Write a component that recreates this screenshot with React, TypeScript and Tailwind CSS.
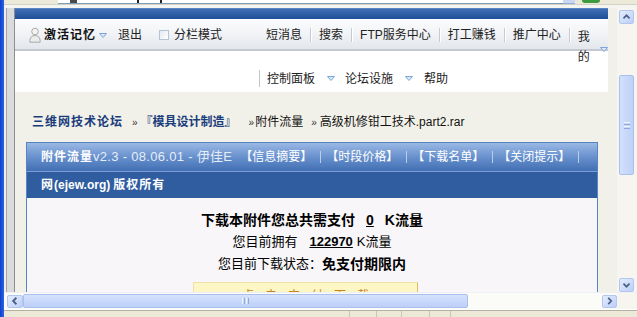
import type { ReactNode } from "react"

function Tri() {
  return (
    <svg width="8" height="5" viewBox="0 0 8 5" className="shrink-0">
      <path d="M0.5 0.5 L7.5 0.5 L4 4.5 Z" fill="#dbe8f8" stroke="#7ba6d9" strokeWidth="1" />
    </svg>
  )
}

function UserIcon() {
  return (
    <svg width="12" height="16" viewBox="0 0 12 16" className="shrink-0">
      <circle cx="6" cy="4.5" r="3.3" fill="#f4f4f4" stroke="#a9a9a9" strokeWidth="1" />
      <path d="M0.8 15.2 C0.8 10 2.8 8.6 6 8.6 C9.2 8.6 11.2 10 11.2 15.2 Z" fill="#ececec" stroke="#a9a9a9" strokeWidth="1" />
    </svg>
  )
}

function Chevron({ dir }: { dir: "up" | "down" | "left" | "right" }) {
  const d = {
    up: "M4 8.5 L7.5 5 L11 8.5",
    down: "M4 5.5 L7.5 9 L11 5.5",
    left: "M9 3.5 L5.5 7 L9 10.5",
    right: "M6 3.5 L9.5 7 L6 10.5",
  }[dir]
  return (
    <svg width="15" height="14" viewBox="0 0 15 14">
      <path d={d} fill="none" stroke="#4d6185" strokeWidth="2" />
    </svg>
  )
}

function ScrollBtn({ dir, w = 15, h = 14 }: { dir: "up" | "down" | "left" | "right"; w?: number; h?: number }) {
  return (
    <div
      className="flex shrink-0 items-center justify-center overflow-hidden rounded-[2px] border border-[#b3c6ef] bg-gradient-to-br from-[#e4edfe] to-[#bccff8]"
      style={{ width: w, height: h }}
    >
      <Chevron dir={dir} />
    </div>
  )
}

function NavSep() {
  return <span className="mx-[8px] h-[14px] w-px shrink-0 bg-[#c6cad2] shadow-[1px_0_0_#ffffff]" />
}

function MenuSep() {
  return <span className="h-[17px] w-px shrink-0 bg-[#c4c4c4]" />
}

function HeadSep() {
  return <span className="ml-[8px] mr-[5px] h-[12px] w-px shrink-0 bg-[#b9cde9]" />
}

function Crumb({ children }: { children: ReactNode }) {
  return <span className="text-[10px] text-[#333]">{children}</span>
}

function TopStrip() {
  return (
    <div className="flex h-[8px] shrink-0 flex-col">
      <div className="flex h-[4px] bg-[#ece9d8]">
        <div className="ml-[54px] flex h-full w-[505px] border-b border-[#7f9db9] bg-white">
          <span className="ml-[12px] h-[3px] w-[7px] bg-[#4a4a4a]" />
          <span className="ml-[60px] h-[3px] w-[2px] bg-[#222]" />
          <span className="ml-[21px] h-[3px] w-[2px] bg-[#222]" />
        </div>
        <div className="h-full w-[12px] border-b border-[#98aed6] bg-[#c9d8f3]" />
        <div className="ml-[7px] h-[3px] w-[18px] rounded-b-[3px] bg-[#3d9a3d]" />
      </div>
      <div className="h-px bg-[#d3d1c6]" />
      <div className="h-[3px] bg-[#f4f4f1]" />
    </div>
  )
}

function Gutter() {
  return (
    <div className="flex w-[11px] shrink-0">
      <div className="w-[2px] bg-[#eeeeee]" />
      <div className="w-px bg-[#a6a6a6]" />
      <div className="flex-1 bg-[#dadbdd]" />
      <div className="w-px bg-[#8e8e8e]" />
    </div>
  )
}

function NavBar() {
  return (
    <div className="flex h-[32px] items-center border-b-2 border-[#c3c9d3] bg-gradient-to-b from-[#fcfcfd] via-[#f1f3f6] to-[#e3e6eb] pt-[2px] text-[12px] text-[#222]">
      <span className="ml-[14px]">
        <UserIcon />
      </span>
      <span className="ml-[3px] font-bold tracking-[1px] text-[#111]">激活记忆</span>
      <span className="ml-[3px]">
        <Tri />
      </span>
      <span className="ml-[11px]">退出</span>
      <span className="ml-[17px] h-[10px] w-[10px] shrink-0 border border-[#b7c3d5] bg-gradient-to-br from-[#e3e9f2] to-white" />
      <span className="ml-[5px]">分栏模式</span>
      <span className="ml-[44px]">短消息</span>
      <NavSep />
      <span>搜索</span>
      <NavSep />
      <span>FTP服务中心</span>
      <NavSep />
      <span>打工赚钱</span>
      <NavSep />
      <span>推广中心</span>
      <NavSep />
      <span className="w-[12px] self-start pt-[6px] leading-[20px]">我的</span>
      <span className="ml-[10px] self-start pt-[26px]">
        <Tri />
      </span>
    </div>
  )
}

function SubMenu() {
  return (
    <div className="h-[41px] bg-white pt-[19px]">
      <div className="flex h-[17px] items-center pl-[244px] text-[12px] text-[#222]">
        <MenuSep />
        <span className="ml-[7px]">控制面板</span>
        <span className="ml-[12px]">
          <Tri />
        </span>
        <span className="ml-[3px]">
          <MenuSep />
        </span>
        <span className="ml-[7px]">论坛设施</span>
        <span className="ml-[12px]">
          <Tri />
        </span>
        <span className="ml-[4px]">
          <MenuSep />
        </span>
        <span className="ml-[7px]">帮助</span>
      </div>
    </div>
  )
}

function Breadcrumb() {
  return (
    <div className="mt-[22px] flex h-[16px] items-center pl-[17px] text-[12px]">
      <span className="font-bold tracking-[1px] text-[#1b3d7c]">三维网技术论坛</span>
      <span className="ml-[9px]">
        <Crumb>»</Crumb>
      </span>
      <span className="ml-[3px] font-bold text-[#1b3d7c]">『模具设计制造』</span>
      <span className="ml-[12px]">
        <Crumb>»</Crumb>
      </span>
      <span className="ml-[1px] text-[#111]">附件流量</span>
      <span className="ml-[8px]">
        <Crumb>»</Crumb>
      </span>
      <span className="ml-[3px] text-[#111]">高级机修钳工技术.part2.rar</span>
    </div>
  )
}

function FlowBox() {
  return (
    <div className="ml-[11px] mt-[12px] w-[572px] border border-[#5884c4] text-[12px]">
      <div className="flex h-[28px] items-center bg-gradient-to-b from-[#9ab8e4] via-[#6891cd] to-[#426fb3] pl-[14px] text-white">
        <span className="font-bold tracking-[1px]">附件流量</span>
        <span className="text-[13px] tracking-[0.3px] text-[#e6edf8]">v2.3 - 08.06.01 - 伊佳E</span>
        <span className="ml-[8px]">【信息摘要】</span>
        <HeadSep />
        <span>【时段价格】</span>
        <HeadSep />
        <span>【下载名单】</span>
        <HeadSep />
        <span>【关闭提示】</span>
        <HeadSep />
      </div>
      <div className="flex h-[27px] items-center border-t border-[#7c9fd2] bg-[#2f5da0] pl-[14px] font-bold text-white">
        <span className="tracking-[1px]">网</span>
        <span>(ejew.org)</span>
        <span className="ml-[3px] tracking-[1px]">版权所有</span>
      </div>
      <div className="flex h-[120px] flex-col items-center bg-[#f8f6f9] pt-[11px] text-[13px] leading-[22px] text-black">
        <div className="flex items-center">
          <span className="text-[14px] font-bold">下载本附件您总共需支付</span>
          <span className="ml-[11px] text-[14px] font-bold underline">0</span>
          <span className="ml-[11px] text-[14px] font-bold">K流量</span>
        </div>
        <div className="flex items-center">
          <span>您目前拥有</span>
          <span className="ml-[12px] font-bold underline">122970</span>
          <span className="ml-[4px]">K流量</span>
        </div>
        <div className="flex items-center">
          <span>您目前下载状态：</span>
          <span className="text-[14px] font-bold">免支付期限内</span>
        </div>
        <div className="mt-[7px] flex w-full justify-center pr-[13px]">
          <div className="h-[30px] w-[225px] border border-[#f0e0a8] border-r-[#e0bd62] bg-[#fdf7c6] pl-[11px] pt-[2px] text-center text-[12px] tracking-[11px] text-[#c8841a]">
            点击支付下载
          </div>
        </div>
      </div>
    </div>
  )
}

function Page() {
  return (
    <div className="h-[284px] w-[602px] shrink-0 overflow-hidden bg-[#f1f1e9]">
      <div className="w-[593px]">
        <div className="h-[11px] border-t border-[#5a86c6] bg-gradient-to-b from-[#3f6eb5] to-[#1f4f98]" />
        <NavBar />
        <SubMenu />
      </div>
      <Breadcrumb />
      <FlowBox />
    </div>
  )
}

function VScroll() {
  return (
    <div className="flex w-[20px] shrink-0 flex-col bg-[#f6f5f0] pl-[2px] pt-[2px]">
      <ScrollBtn dir="up" />
      <div className="mt-[51px] flex h-[100px] w-[15px] items-center justify-center rounded-[2px] border border-[#a9c0ec] bg-gradient-to-r from-[#d3e0fd] to-[#bfd1f8]">
        <div className="flex flex-col gap-[1px]">
          <span className="h-px w-[6px] bg-[#eef3fe]" />
          <span className="h-px w-[6px] bg-[#8fa9dc]" />
          <span className="h-px w-[6px] bg-[#eef3fe]" />
          <span className="h-px w-[6px] bg-[#8fa9dc]" />
        </div>
      </div>
      <div className="flex-1" />
      <ScrollBtn dir="down" />
    </div>
  )
}

function HScroll() {
  return (
    <div className="flex h-[17px] shrink-0 items-center border-t border-[#eef0f4] bg-[#fbfbf8]">
      <div className="ml-[3px]">
        <ScrollBtn dir="left" w={16} h={13} />
      </div>
      <div className="flex h-[14px] w-[445px] items-center justify-center rounded-[2px] border border-[#a9c0ec] bg-gradient-to-b from-[#d6e2fd] to-[#bccff8]">
        <div className="flex gap-[1px]">
          <span className="h-[6px] w-px bg-[#eef3fe]" />
          <span className="h-[6px] w-px bg-[#8fa9dc]" />
          <span className="h-[6px] w-px bg-[#eef3fe]" />
          <span className="h-[6px] w-px bg-[#8fa9dc]" />
        </div>
      </div>
      <div className="flex-1" />
      <ScrollBtn dir="right" w={15} h={13} />
      <div className="h-full w-[20px] bg-[#f6f5f0]" />
    </div>
  )
}

function StatusBar() {
  return (
    <div className="flex flex-1 flex-col">
      <div className="h-px bg-white" />
      <div className="h-px bg-[#b4b1a3]" />
      <div className="flex flex-1 bg-[#ece9d8]">
        <span className="ml-[345px] w-px bg-[#c9c6b5]" />
        <span className="ml-[26px] w-px bg-[#c9c6b5]" />
        <span className="ml-[24px] w-px bg-[#c9c6b5]" />
        <span className="ml-[27px] w-px bg-[#c9c6b5]" />
        <span className="ml-[20px] w-px bg-[#c9c6b5]" />
      </div>
    </div>
  )
}

export default function App() {
  return (
    <div className="flex h-[317px] w-[637px] overflow-hidden bg-[#ece9d8] font-['Liberation_Sans','Noto_Sans_CJK_SC',sans-serif] text-[12px] text-black">
      <div className="w-[4px] shrink-0 bg-gradient-to-r from-[#0b40d0] to-[#2e64e0]" />
      <div className="flex min-w-0 flex-1 flex-col">
        <TopStrip />
        <div className="flex h-[284px] shrink-0">
          <Gutter />
          <Page />
          <VScroll />
        </div>
        <HScroll />
        <StatusBar />
      </div>
    </div>
  )
}
